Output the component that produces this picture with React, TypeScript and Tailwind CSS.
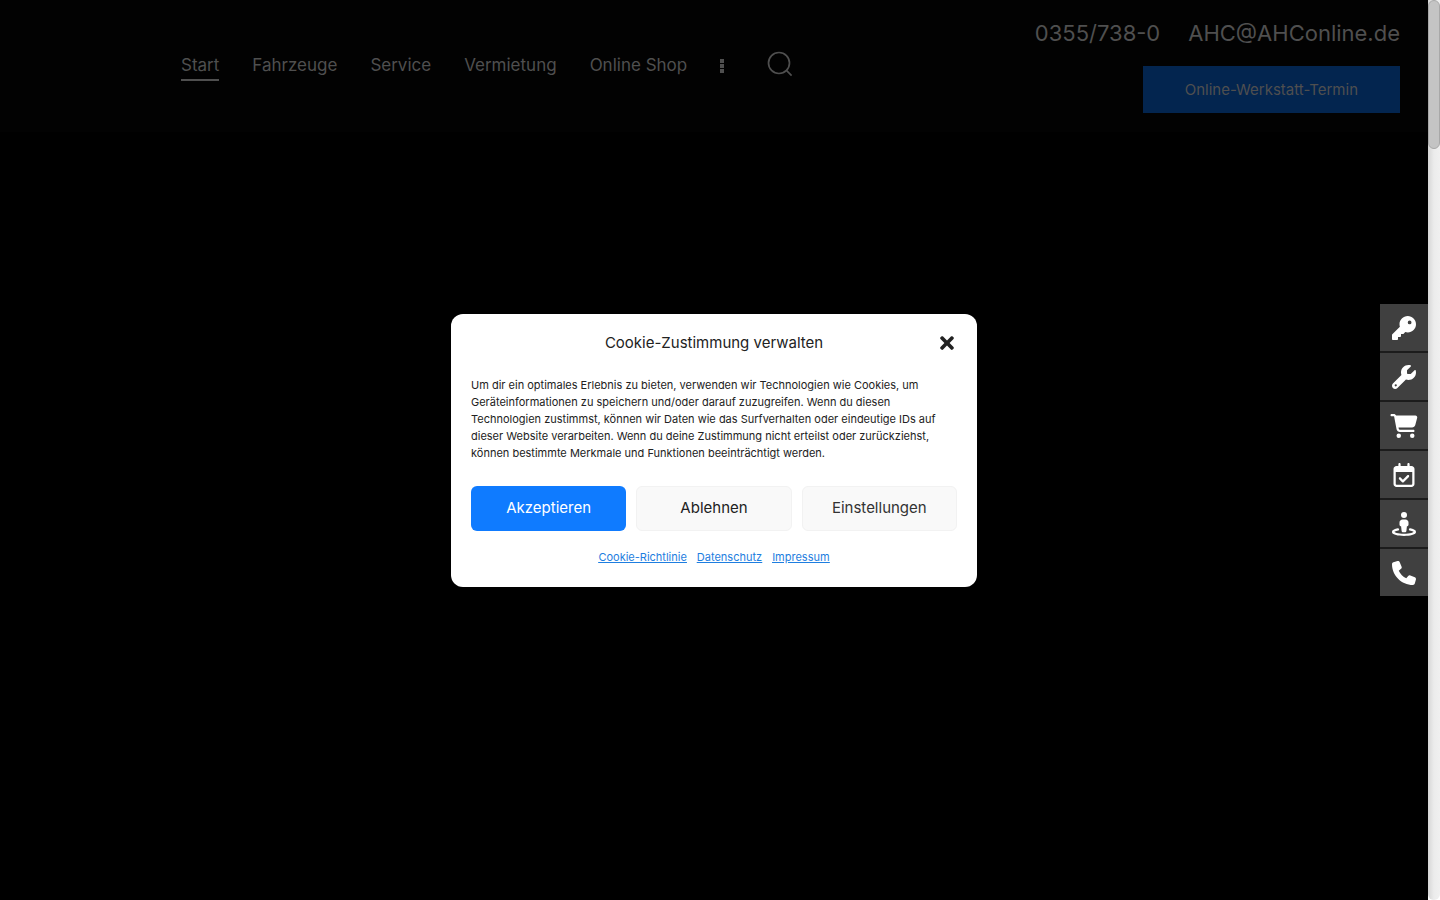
import React, { useState } from 'react';
import { FaTimes } from 'react-icons/fa';
import {
  FaCartShopping,
  FaKey,
  FaPhone,
  FaRegCalendarCheck,
  FaStreetView,
  FaWrench,
} from 'react-icons/fa6';
import clsx from 'clsx';

const navItems = ['Start', 'Fahrzeuge', 'Service', 'Vermietung', 'Online Shop'];

const quickLinks = [
  { label: 'Vermietung', icon: <FaKey className="size-6" /> },
  { label: 'Service', icon: <FaWrench className="size-6" /> },
  { label: 'Online Shop', icon: <FaCartShopping className="h-6 w-7" /> },
  { label: 'Termin', icon: <FaRegCalendarCheck className="size-6" /> },
  { label: 'Anfahrt', icon: <FaStreetView className="size-6" /> },
  { label: 'Telefon', icon: <FaPhone className="size-6" /> },
];

const Header = () => (
  <header className="flex h-33 items-start justify-between bg-[#020202] pr-7 pl-[181px] text-[#4f4f4f]">
    <nav className="flex items-center gap-[33px] pt-[51px] text-[17px] leading-[28px]">
      {navItems.map((item, i) => (
        <a
          key={item}
          href="#"
          className={clsx('border-b-2', i === 0 ? 'border-[#4f4f4f]' : 'border-transparent')}
        >
          {item}
        </a>
      ))}
      <button aria-label="Mehr" className="flex flex-col gap-px">
        <span className="size-1 bg-[#4f4f4f]" />
        <span className="size-1 bg-[#4f4f4f]" />
        <span className="size-1 bg-[#4f4f4f]" />
      </button>
      <button aria-label="Suche" className="mb-1 ml-2.5">
        <svg viewBox="0 0 26 26" className="size-[26px]" fill="none" stroke="currentColor" strokeWidth="1.7">
          <circle cx="12" cy="12" r="10.5" />
          <path d="M19.2 19.2 24.6 24.6" />
        </svg>
      </button>
    </nav>

    <div className="flex flex-col items-end gap-[17px] pt-[17px]">
      <div className="flex gap-7 text-[22px] leading-8">
        <a href="tel:03557380">0355/738-0</a>
        <a href="mailto:AHC@AHConline.de">AHC@AHConline.de</a>
      </div>
      <a href="#" className="bg-[#03254f] px-[42px] text-[15px] leading-[47px]">
        Online-Werkstatt-Termin
      </a>
    </div>
  </header>
);

const CookieDialog = ({ onClose }: { onClose: () => void }) => (
  <div
    role="dialog"
    aria-labelledby="cookie-title"
    className="w-[526px] rounded-xl bg-white px-5 pt-[18px] pb-[21px] text-[#222222]"
  >
    <div className="grid grid-cols-[1fr_auto_1fr] items-center">
      <h2 id="cookie-title" className="col-start-2 text-[15px] leading-[22px]">
        Cookie-Zustimmung verwalten
      </h2>
      <button aria-label="Dialog schließen" onClick={onClose} className="justify-self-end pr-[3px]">
        <FaTimes className="h-5 w-[14px]" />
      </button>
    </div>

    <p className="mt-[23px] text-[11px] leading-[17px]">
      Um dir ein optimales Erlebnis zu bieten, verwenden wir Technologien wie Cookies, um
      Geräteinformationen zu speichern und/oder darauf zuzugreifen. Wenn du diesen Technologien
      zustimmst, können wir Daten wie das Surfverhalten oder eindeutige IDs auf dieser Website
      verarbeiten. Wenn du deine Zustimmung nicht erteilst oder zurückziehst, können bestimmte
      Merkmale und Funktionen beeinträchtigt werden.
    </p>

    <div className="mt-6 grid grid-cols-3 gap-2.5 text-[15px]">
      <button onClick={onClose} className="h-[45px] rounded-md bg-[#0f7bff] text-white">
        Akzeptieren
      </button>
      <button onClick={onClose} className="h-[45px] rounded-md border border-[#f2f2f2] bg-[#f9f9f9]">
        Ablehnen
      </button>
      <button className="h-[45px] rounded-md border border-[#f2f2f2] bg-[#f9f9f9] text-[#333333]">
        Einstellungen
      </button>
    </div>

    <div className="mt-[17px] flex justify-center gap-2.5 text-[11px] leading-[18px] text-[#1e7ee0] underline">
      <a href="#">Cookie-Richtlinie</a>
      <a href="#">Datenschutz</a>
      <a href="#">Impressum</a>
    </div>
  </div>
);

const App: React.FC = () => {
  const [showCookies, setShowCookies] = useState(true);

  return (
    <div className="flex h-screen bg-black font-['Inter',sans-serif]">
      <div className="relative min-w-0 flex-1">
        <Header />

        {/* Quick links on the right edge */}
        <aside className="absolute inset-y-0 right-0 flex flex-col justify-center">
          <div className="flex flex-col gap-0.5 bg-[#1c1c1c]">
            {quickLinks.map((link) => (
              <a
                key={link.label}
                href="#"
                aria-label={link.label}
                className="flex h-[47px] w-12 items-center justify-center bg-[#404040] text-white"
              >
                {link.icon}
              </a>
            ))}
          </div>
        </aside>

        {showCookies && (
          <div className="pointer-events-none absolute inset-0 flex items-center justify-center">
            <div className="pointer-events-auto">
              <CookieDialog onClose={() => setShowCookies(false)} />
            </div>
          </div>
        )}
      </div>

      {/* Scrollbar */}
      <div className="w-3 bg-white">
        <div className="h-full rounded-b-full bg-linear-to-r from-[#d6d6d6] via-[#ececec] to-[#f0f0f0]">
          <div className="h-[149px] rounded-full border border-[#a8a8a8] bg-[#c4c4c4]" />
        </div>
      </div>
    </div>
  );
};

export default App;
